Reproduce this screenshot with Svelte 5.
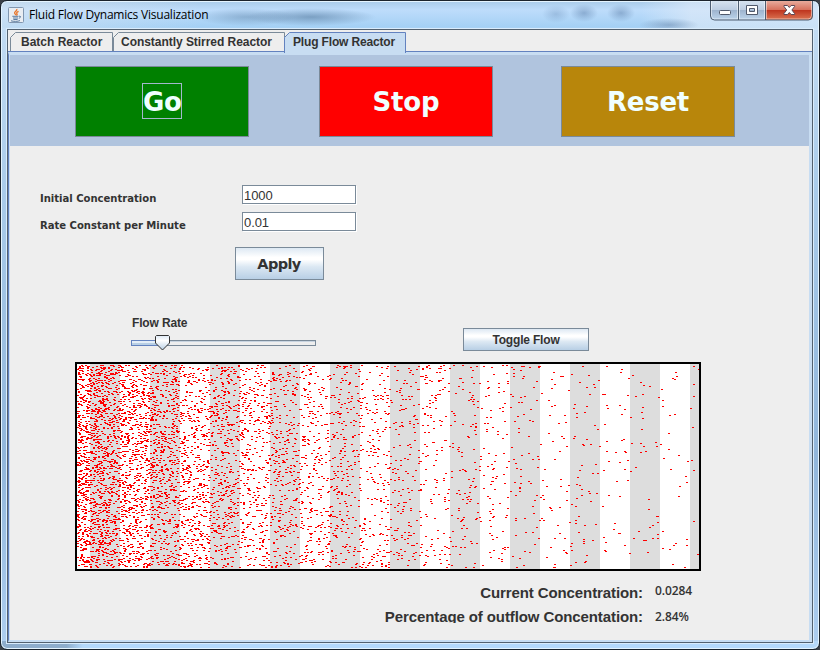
<script>
  const tabs = ['Batch Reactor', 'Constantly Stirred Reactor', 'Plug Flow Reactor'];
  const tabWidths = [103, 172, 122];
  const selected = 2;
  let initial = $state('1000');
  let rate = $state('0.01');

  // Tracer particles thin out exponentially from inlet to outlet.
  const W = 622;
  const H = 205;
  const COUNT = 5900;
  const DECAY = 3.6;
  let seed = 20117;
  function random() {
    seed = (seed + 0x6d2b79f5) | 0;
    let t = Math.imul(seed ^ (seed >>> 15), 1 | seed);
    t = (t + Math.imul(t ^ (t >>> 7), 61 | t)) ^ t;
    return ((t ^ (t >>> 14)) >>> 0) / 4294967296;
  }
  let d = '';
  for (let i = 0; i < COUNT; i++) {
    const u = random();
    const x = Math.floor((-Math.log(1 - u * (1 - Math.exp(-DECAY))) / DECAY) * W);
    const y = 1 + Math.floor(random() * (H - 2));
    d += `M${x} ${y}h2v1h-2z`;
  }
  const stripes = Array.from({ length: 11 }, (_, i) => 13 + i * 60);
</script>

<div class="desktop">
  <div class="window">
    <header class="titlebar">
      <svg class="java" width="16" height="16" viewBox="0 0 16 16">
        <rect x="0.5" y="0.5" width="15" height="15" rx="1" fill="#e9edf2" stroke="#8197b0" />
        <path d="M8.8 2c.8 1.700-2.600 2.500-2.200 4.100.2.800 1.300 1.200 1.300 2.200M10.600 4.300C8.500 5.300 8.300 6 9 6.900c.4.600 0 1.200-.6 1.500" fill="none" stroke="#e8762c" stroke-width="1.300" />
        <path d="M4.300 9.300h6.200M5 11h5M5.400 12.500h4.200M3 13.800c2.500.8 6.800.8 9-.2M11 9.300c2-.7 2.300 1.300-.2 2" fill="none" stroke="#4c6f96" stroke-width="0.900" />
      </svg>
      <span class="title">Fluid Flow Dynamics Visualization</span>
      <div class="controls">
        <svg width="103" height="20" viewBox="0 0 103 20">
          <defs>
            <linearGradient id="glass" x2="0" y2="1">
              <stop offset="0" stop-color="#d5e2ef" /><stop offset=".46" stop-color="#bccde1" />
              <stop offset=".5" stop-color="#9fb5cf" /><stop offset="1" stop-color="#bdd5ec" />
            </linearGradient>
            <linearGradient id="close" x2="0" y2="1">
              <stop offset="0" stop-color="#e8ab9c" /><stop offset=".46" stop-color="#d7715d" />
              <stop offset=".5" stop-color="#bf3620" /><stop offset="1" stop-color="#dc7654" />
            </linearGradient>
          </defs>
          <path d="M.5 0H102.500V15q0 4-4 4H4.500q-4 0-4-4z" fill="url(#glass)" />
          <path d="M56 0H102.500V15q0 4-4 4H56z" fill="url(#close)" />
          <path d="M1.500 0V15q0 3 3 3H27.500V0M29.500 0V18H54.500V0M56.500 0V18H98q3.500 0 3.500-3.500V0" fill="none" stroke="#fff" stroke-opacity=".5" />
          <path d="M.5 0V15q0 4 4 4H98.500q4 0 4-4V0M28.500 0V19M55.500 0V19" fill="none" stroke="#4d5d70" />
          <rect x="9.500" y="9.500" width="11" height="4" rx="1" fill="#fff" stroke="#515a6c" />
          <path d="M36.500 4.500h11v9h-11zM39.500 7.500v3h5v-3z" fill="#fff" stroke="#515a6c" fill-rule="evenodd" />
          <path transform="translate(0 -1)" d="M74 5.500h3.500l1.800 2 1.800-2h3.500v1l-2.700 3.500 2.700 3.500v1h-3.500l-1.800-2-1.800 2H74v-1l2.700-3.500L74 6.500z" fill="#fff" stroke="#5a4654" />
        </svg>
      </div>
    </header>

    <main class="client">
      <nav class="tabs">
        {#each tabs as tab, i}
          <div class="tab" class:active={i === selected} style:width="{tabWidths[i]}px">
            <svg class="outline" width={tabWidths[i]} height="19">
              <path d="M.5 22V5.500L5.500.5H{tabWidths[i] - 0.5}V22" />
            </svg>
            <span>{tab}</span>
          </div>
        {/each}
      </nav>

      <div class="content">
        <section class="actions">
          <button class="big go"><span>Go</span></button>
          <button class="big stop"><span>Stop</span></button>
          <button class="big reset"><span>Reset</span></button>
        </section>

        <section class="form">
          <label><span>Initial Concentration</span><input bind:value={initial} /></label>
          <label class="second"><span>Rate Constant per Minute</span><input bind:value={rate} /></label>
          <button class="metal apply">Apply</button>
        </section>

        <section class="flow">
          <div class="slider">
            <span>Flow Rate</span>
            <svg width="186" height="18" viewBox="0 0 186 18">
              <defs>
                <linearGradient id="thumb" x2="0" y2="1">
                  <stop offset="0" stop-color="#dce8f4" /><stop offset=".35" stop-color="#fff" /><stop offset="1" stop-color="#b8cfe5" />
                </linearGradient>
              </defs>
              <rect x=".5" y="6.500" width="184" height="5" fill="#eee" stroke="#7a8a99" />
              <path d="M1 7.500H184" stroke="#c8d4e0" />
              <rect x=".5" y="6.500" width="30" height="5" fill="#b8cfe5" stroke="#6382bf" />
              <path d="M1 8H30" stroke="#e4eef8" stroke-width="2" />
              <path d="M25.500 1.500H37.500L38.500 2.500V9L31.500 16 24.500 9V2.500Z" fill="url(#thumb)" stroke="#333" />
            </svg>
          </div>
          <button class="metal toggle">Toggle Flow</button>
        </section>

        <svg class="reactor" width={W} height={H} viewBox="0 0 {W} {H}" shape-rendering="crispEdges">
          <rect width={W} height={H} fill="#fff" />
          {#each stripes as x}
            <rect {x} y="0" width="30" height={H} fill="#ddd" />
          {/each}
          <path {d} fill="#f00" fill-rule="nonzero" />
        </svg>

        <section class="results">
          <div class="row"><span class="name">Current Concentration:</span><span class="value">0.0284</span></div>
          <div class="row low"><span class="name">Percentage of outflow Concentation:</span><span class="value v2">2.84%</span></div>
        </section>
      </div>
    </main>
  </div>
</div>

<style>
  :global(body) { margin: 0; overflow: hidden; }
  .desktop { width: 820px; height: 650px; background: #3b4047; overflow: hidden; }
  .window {
    box-sizing: border-box; width: 820px; height: 650px; padding: 0 6px 6px;
    border: 1px solid #1b232c; border-radius: 7px;
    box-shadow: inset 0 0 0 1px #e4f4ff;
    background:
      radial-gradient(ellipse 50px 9px at 245px 16px, rgba(68, 105, 142, .35), transparent),
      radial-gradient(ellipse 65px 9px at 310px 16px, rgba(68, 105, 142, .5), transparent),
      radial-gradient(ellipse 14px 9px at 555px 13px, rgba(70, 105, 150, .25), transparent),
      radial-gradient(ellipse 14px 9px at 583px 12px, rgba(70, 105, 150, .4), transparent),
      radial-gradient(ellipse 14px 9px at 620px 12px, rgba(70, 105, 150, .4), transparent),
      radial-gradient(ellipse 30px 7px at 668px 24px, rgba(70, 105, 150, .4), transparent),
      linear-gradient(90deg, rgba(222, 232, 242, .5), transparent 200px 640px, rgba(222, 234, 248, .65) 690px) 0 0 / 100% 29px no-repeat,
      linear-gradient(#a9cbe9, #bddcfb 9px, #a4d0f4 26px, #b5d9fb 29px) 0 0 / 100% 29px no-repeat,
      linear-gradient(90deg, #8eadcc 8%, #b5d9fb 10%, #b5d9fb) 0 100% / 100% 8px no-repeat,
      linear-gradient(#c6def4, #a9cbea 30%, #91b6db 70%, #adcef0);
    font-family: "Liberation Sans", Arial, sans-serif; color: #333;
  }
  .titlebar { display: flex; height: 28px; padding-left: 1px; }
  .java { margin-top: 6px; }
  .title { margin: 5px 0 0 5px; font: 12px/18px "Open Sans", "Noto Sans", sans-serif; color: #000; letter-spacing: -.22px; white-space: nowrap; }
  .controls { margin: 0 0 0 auto; }
  .controls svg { display: block; }
  .client { box-sizing: border-box; width: 806px; height: 614px; border: 1px solid #53616f; background: #eee; box-shadow: 0 0 0 1px #d9ecfc; }
  .tabs { display: flex; height: 22px; padding: 2px 0 0 2px; box-sizing: border-box; }
  .tab { position: relative; display: flex; height: 19px; flex-shrink: 0; }
  .tab span { position: relative; margin: 3px 0 0 11px; font-size: 12px; line-height: 14px; font-weight: bold; white-space: nowrap; }
  .tab:nth-child(2) span { margin-left: 8px; letter-spacing: -.04px; }
  .tab:nth-child(3) span { margin-left: 9px; letter-spacing: -.16px; }
  .outline { position: absolute; left: 0; top: 0; }
  .outline path { fill: #eee; stroke: #7a8a99; }
  .active { z-index: 2; margin-left: -1px; }
  .active .outline { height: 21px; }
  .active .outline path { fill: #c8ddf2; stroke: #6382bf; }
  .content { box-sizing: border-box; width: 804px; height: 590px; border: solid #c8ddf2; border-width: 3px 3px 2px 1px; border-left-color: #6382bf; box-shadow: inset 1px 0 #c8ddf2, 0 -1px #6382bf; background: #eee; }
  .actions { display: flex; align-items: flex-start; height: 91px; padding: 11px 0 0 65px; box-sizing: border-box; background: #b0c4de; margin-left: 1px; }
  button { box-sizing: border-box; padding: 0; border: 1px solid #7a8a99; color: #333; font-weight: bold; }
  .big { width: 174px; height: 71px; font: bold 26px/34px "DejaVu Sans", Verdana, sans-serif; color: azure; }
  .big span { display: inline-block; letter-spacing: -.2px; }
  .go { background: #008000; }
  .go span { width: 38px; height: 34px; line-height: 36px; border: 1px solid #a3b8cc; letter-spacing: -.4px; text-indent: 0; position: relative; top: -1px; }
  .stop { background: #f00; margin-left: 70px; }
  .reset { background: #b8860b; margin-left: 68px; }
  .form { display: flex; flex-direction: column; align-items: flex-start; padding: 39px 0 0 31px; }
  label { display: flex; height: 19px; font: bold 12px/28px "DejaVu Sans Condensed", "DejaVu Sans", Tahoma, sans-serif; }
  label span { width: 202px; white-space: nowrap; font-size: 11.200px; font-stretch: condensed; letter-spacing: -.02px; }
  .second { margin-top: 8px; }
  label.second { line-height: 27px; }
  input { box-sizing: border-box; width: 114px; height: 19px; padding: 2px 1px 0 1px; border: 1px solid #7a8a99; border-radius: 0; background: #fff; color: #333; font: 13px/15px "Liberation Sans", Arial, sans-serif; letter-spacing: -.1px; box-shadow: 1px 1px #fff; outline: 0; }
  .metal { background: linear-gradient(#dde8f3, #fff 30%, #fff 38%, #dce8f3 60%, #b8cfe5); }
  .apply { margin: 16px 0 0 195px; width: 89px; height: 33px; padding-right: 1px; font: bold 14.500px/28px "DejaVu Sans", sans-serif; letter-spacing: -.6px; }
  .flow { display: flex; align-items: flex-start; padding: 36px 0 0 122px; }
  .slider { display: flex; flex-direction: column; width: 186px; font-size: 12px; line-height: 14px; font-weight: bold; }
  .slider span { padding-left: 1px; letter-spacing: -.15px; }
  .slider svg { margin-top: 4px; }
  .toggle { margin: 12px 0 0 146px; width: 126px; height: 23px; font: bold 12px/18px "Liberation Sans", sans-serif; letter-spacing: -.18px; }
  .reactor { display: block; margin: 10px 0 0 66px; border: 2px solid #000; }
  .results { padding: 10px 0 0 340px; }
  .row { display: flex; height: 24px; }
  .name { width: 294px; height: 18px; text-align: right; font-size: 15px; line-height: 24px; font-weight: bold; white-space: nowrap; letter-spacing: -.1px; }
  .low .name { overflow: hidden; }
  .value { margin-left: 12px; font: bold 12px/20px "Open Sans", sans-serif; font-weight: 600; letter-spacing: -.1px; }
  .v2 { line-height: 24px; }
</style>
